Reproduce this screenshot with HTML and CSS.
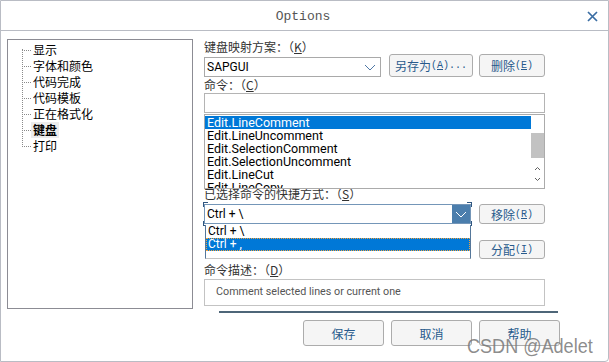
FILE: index.html
```html
<!DOCTYPE html>
<html lang="zh-CN">
<head>
<meta charset="utf-8">
<title>Options</title>
<link rel="stylesheet" href="styles.css">
</head>
<body>
<div class="win">
  <div class="titlebar">
    <span></span>
    <span class="title">Options</span>
    <svg class="close" width="11" height="11" viewBox="0 0 11 11"><path d="M1 1 L10 10 M10 1 L1 10" stroke="#3a6da3" stroke-width="1.7" fill="none"/></svg>
  </div>
  <div class="body">
    <div class="tree-panel">
      <ul class="tree">
        <li>显示</li>
        <li>字体和颜色</li>
        <li>代码完成</li>
        <li>代码模板</li>
        <li>正在格式化</li>
        <li><span class="cur">键盘</span></li>
        <li>打印</li>
      </ul>
    </div>
    <div class="right">
      <div class="lbl l1">键盘映射方案：（<u>K</u>）</div>
      <div class="row1">
        <div class="combo c1"><span class="ctext">SAPGUI</span><svg class="chev" width="12" height="7" viewBox="0 0 12 7"><polyline points="1,1 6,6 11,1" stroke="#4f78a6" stroke-width="1" fill="none"/></svg></div>
        <button class="btn b-saveas">另存为<span class="mn">(<u>A</u>)...</span></button>
        <button class="btn b-sm">删除<span class="mn">(<u>E</u>)</span></button>
      </div>
      <div class="lbl">命令：（<u>C</u>）</div>
      <div class="input"></div>
      <div class="list">
        <div class="items">
          <div class="item sel">Edit.LineComment</div>
          <div class="item">Edit.LineUncomment</div>
          <div class="item">Edit.SelectionComment</div>
          <div class="item">Edit.SelectionUncomment</div>
          <div class="item">Edit.LineCut</div>
          <div class="item">Edit.LineCopy</div>
        </div>
        <div class="sbar">
          <div class="thumb"></div>
          <svg class="arrows" width="13" height="18" viewBox="0 0 13 18"><polyline points="4,4 6.5,1.5 9,4" stroke="#606060" stroke-width="1" fill="none"/><polyline points="4,12 6.5,14.5 9,12" stroke="#606060" stroke-width="1" fill="none"/></svg>
        </div>
      </div>
      <div class="lbl l3">已选择命令的快捷方式：（<u>S</u>）</div>
      <div class="row2">
        <div class="c2wrap">
          <div class="combo c2"><span class="ctext">Ctrl + \</span><div class="ddbtn"><svg width="12" height="7" viewBox="0 0 12 7"><polyline points="1,1 6,6 11,1" stroke="#ffffff" stroke-width="1" fill="none"/></svg></div></div>
          <span class="corner tl"></span><span class="corner tr"></span><span class="corner bl"></span><span class="corner br"></span>
          <div class="dropdown">
            <div class="ditem">Ctrl + \</div>
            <div class="ditem dsel">Ctrl + ,</div>
          </div>
        </div>
        <button class="btn b-sm b-row">移除<span class="mn">(<u>R</u>)</span></button>
      </div>
      <div class="row3"><button class="btn b-sm b-row">分配<span class="mn">(<u>I</u>)</span></button></div>
      <div class="lbl l4">命令描述：（<u>D</u>）</div>
      <div class="desc">Comment selected lines or current one</div>
    </div>
  </div>
  <div class="sep"></div>
  <div class="footer">
    <button class="btn b-foot">保存</button>
    <button class="btn b-foot">取消</button>
    <button class="btn b-foot">帮助</button>
  </div>
  <div class="wm">CSDN @Adelet</div>
</div>
</body>
</html>
```
FILE: styles.css
```css
* { box-sizing: border-box; }
body {
  margin: 0;
  font-family: "Noto Sans CJK SC", sans-serif;
  font-size: 12px;
  background: #fff;
}
.win {
  width: 609px;
  height: 362px;
  border: 1px solid #b9bcc4;
  border-radius: 0 0 4px 0;
  position: relative;
  background: #fff;
  overflow: hidden;
}
.titlebar {
  height: 30px;
  border-bottom: 1px solid #b9bcc4;
  display: grid;
  grid-template-columns: 1fr auto 1fr;
  align-items: center;
}
.title {
  font-family: "Liberation Mono", monospace;
  font-size: 13px;
  color: #555;
  margin-left: -3px;
  margin-top: 2px;
}
.close {
  justify-self: end;
  margin-right: 10px;
  margin-top: 2px;
}
.body {
  display: flex;
  padding: 8px 0 0 6px;
}
.tree-panel {
  width: 186px;
  height: 270px;
  border: 1px solid #8c8c94;
}
.tree {
  list-style: none;
  margin: 0 0 0 14px;
  padding: 2px 0 0 0;
  position: relative;
}
.tree::before {
  content: "";
  position: absolute;
  left: 0;
  top: 9px;
  height: 98px;
  border-left: 1px dotted #8a8a8a;
}
.tree li {
  height: 16px;
  line-height: 16px;
  padding-left: 11px;
  position: relative;
  color: #000;
  font-size: 12px;
}
.tree li::before {
  content: "";
  position: absolute;
  left: 0;
  top: 8px;
  width: 9px;
  border-top: 1px dotted #8a8a8a;
}
.tree .cur {
  font-weight: bold;
  background: #ececec;
  display: inline-block;
  padding: 0 2px;
  margin-left: -2px;
}
.right {
  width: 341px;
  margin-left: 11px;
  display: flex;
  flex-direction: column;
}
.lbl {
  height: 16px;
  line-height: 16px;
  color: #333;
  font-size: 12px;
  white-space: nowrap;
}
.l1 { height: 15px; line-height: 15px; }
.l3 { margin-top: -3px; }
.l4 { margin-top: 3px; }
.row1 {
  display: flex;
  align-items: flex-end;
  height: 23px;
}
.combo {
  font-family: Roboto, "Noto Sans CJK SC", sans-serif;
  font-size: 12px;
  color: #000;
  display: flex;
  align-items: center;
  background: #fff;
}
.c1 {
  width: 177px;
  height: 20px;
  border: 1px solid #a9a9a9;
  padding-left: 2px;
  justify-content: space-between;
  font-size: 12px;
}
.c1 .chev { margin-right: 4px; }
.btn {
  font-family: "Noto Sans CJK SC", sans-serif;
  font-size: 12px;
  color: #285a8c;
  background: #f5f5f5;
  border: 1px solid #acacac;
  border-radius: 3px;
  padding: 0;
  margin: 0;
  display: flex;
  align-items: center;
  justify-content: center;
  white-space: nowrap;
}
.mn {
  font-family: "Liberation Mono", monospace;
  font-size: 10px;
}
.b-saveas {
  width: 84px;
  height: 23px;
  margin-left: 8px;
}
.b-sm {
  width: 66px;
  height: 23px;
  margin-left: 6px;
}
.b-row {
  height: 20px;
  margin-left: 8px;
}
.input {
  height: 20px;
  border: 1px solid #b4b4b4;
  background: #fff;
}
.list {
  margin-top: 1px;
  height: 75px;
  border: 1px solid #ababab;
  display: flex;
  position: relative;
  z-index: 1;
  background: #fff;
  overflow: hidden;
}
.items {
  flex: 1;
  padding-top: 1px;
}
.item {
  height: 13px;
  line-height: 13px;
  padding-left: 2px;
  font-family: Roboto, sans-serif;
  font-size: 12.5px;
  color: #000;
  white-space: nowrap;
}
.item.sel {
  background: #0078d7;
  color: #fff;
}
.sbar {
  width: 13px;
  display: flex;
  flex-direction: column;
}
.thumb {
  margin-top: 18px;
  height: 25px;
  background: #c2c2c2;
}
.arrows { margin-top: 8px; }
.row2 {
  margin-top: 2px;
  display: flex;
  height: 20px;
}
.c2wrap {
  position: relative;
  width: 267px;
  height: 20px;
}
.c2 {
  width: 267px;
  height: 20px;
  border: 1px solid #7496b8;
  padding-left: 2px;
  justify-content: space-between;
}
.ddbtn {
  width: 18px;
  height: 18px;
  background: #4b7ead;
  display: flex;
  align-items: center;
  justify-content: center;
}
.corner {
  position: absolute;
  width: 5px;
  height: 5px;
  border-color: #2f5680;
  border-style: solid;
  border-width: 0;
}
.corner.tl { left: -1px; top: -2px; border-left-width: 1px; border-top-width: 1px; }
.corner.tr { right: -1px; top: -2px; border-right-width: 1px; border-top-width: 1px; }
.corner.bl { left: -1px; bottom: -2px; border-left-width: 1px; border-bottom-width: 1px; }
.corner.br { right: -1px; bottom: -2px; border-right-width: 1px; border-bottom-width: 1px; }
.dropdown {
  position: absolute;
  left: 1px;
  top: 21px;
  width: 266px;
  height: 34px;
  border: 1px solid #55779a;
  border-top: none;
  border-bottom-color: #c4c4c4;
  background: #fff;
  z-index: 2;
}
.ditem {
  height: 13px;
  line-height: 12px;
  padding-left: 2px;
  font-family: Roboto, sans-serif;
  font-size: 12px;
  color: #000;
}
.ditem.dsel {
  background: #0078d7;
  color: #fff;
  border: 1px dotted #f2a23c;
  line-height: 11px;
  padding-left: 1px;
}
.row3 {
  margin-top: 16px;
  display: flex;
  justify-content: flex-end;
  height: 19px;
}
.row3 .b-row { height: 19px; }
.desc {
  margin-top: 1px;
  height: 27px;
  border: 1px solid #c3c3c3;
  padding-left: 11px;
  line-height: 24px;
  font-family: Roboto, sans-serif;
  font-size: 10.75px;
  color: #555;
}
.sep {
  margin-top: 2px;
  margin-left: 218px;
  width: 339px;
  height: 2px;
  background: #4e6678;
}
.footer {
  margin-top: 7px;
  padding-left: 302px;
  display: flex;
  gap: 7px;
}
.b-foot {
  width: 81px;
  height: 26px;
}
.wm {
  position: absolute;
  left: 466px;
  top: 334px;
  font-family: "Liberation Sans", Arial, sans-serif;
  font-size: 21px;
  line-height: 21px;
  color: rgba(120, 120, 120, 0.85);
  transform: scaleX(0.86);
  transform-origin: left top;
  white-space: nowrap;
}
```
